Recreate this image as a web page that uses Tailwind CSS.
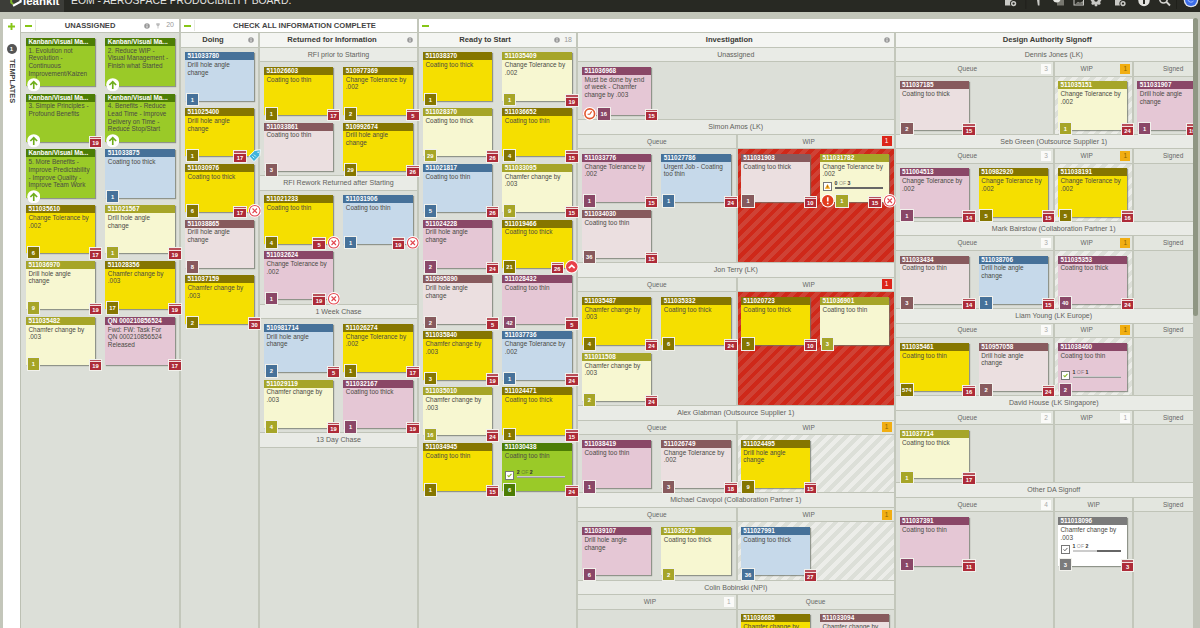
<!DOCTYPE html>
<html lang="en">
<head>
<meta charset="utf-8">
<title>EOM - Aerospace Producibility Board</title>
<script src="https://cdn.jsdelivr.net/npm/@tailwindcss/browser@4"></script>
</head>
<body class="w-[1200px] h-[628px] overflow-hidden bg-[#c3c6ba] font-['Liberation_Sans',Arial,sans-serif] flex flex-col text-[#444]">

<header class="h-[12px] shrink-0 bg-[#282923] flex overflow-hidden">
  <div class="w-[64px] bg-[#3c3d38] flex items-start shrink-0 overflow-hidden">
    <svg class="ml-[10px] w-[12px] h-[12px] -mt-[5px]" viewBox="0 0 12 12"><path d="M1.2 2v5.6l2 1.6" fill="none" stroke="#7fb52a" stroke-width="2"/><path d="M3 10.8l7.6-4.2V2" fill="none" stroke="#fff" stroke-width="2.2"/></svg>
    <span class="text-white font-bold text-[11.5px] leading-[12px] -mt-[5px] ml-[1px]">leankit</span>
  </div>
  <span class="text-[#e4e4e0] text-[10.35px] leading-[12px] -mt-[5px] ml-[7px] whitespace-nowrap">EOM - AEROSPACE PRODUCIBILITY BOARD.</span>
  <svg class="ml-auto w-[200px] h-[12px] shrink-0" viewBox="1000 0 200 12" fill="#c9c9c5">
    <path d="M1005 0h8v5.5h-8z"/><circle cx="1013.6" cy="3.6" r="3.6" fill="#282923"/><circle cx="1013.6" cy="3.6" r="1.9" fill="none" stroke="#c9c9c5" stroke-width="1.5"/>
    <path d="M1025.5 0h.7v9h-.7zM1176 0h.7v9h-.7z" fill="#1c1d18"/>
    <path d="M1037 0h2.5v5.5h-1.6z"/>
    <path d="M1057 0h7v5.5h-7z" fill="#77776f"/><path d="M1053 0h7.5a4 4 0 0 1-7.500 0z" fill="#e6e6e2"/>
    <path d="M1073.500 0h1v4.500h8.500v-4.500h1v5.500h-10.500z"/><path d="M1075.500 3.800l2.500-2 2 1 3-1.800v2.800z" fill="#8c8c86"/>
    <path d="M1090.500 0h11l-1.300 2 .5 2-1.800.9-1.200-.9-.6 2.200h-2.200l-.6-2.200-1.300.9-1.700-.9.500-2z"/><circle cx="1096" cy="0" r="1.800" fill="#282923"/>
    <path d="M1115 0h8v5.500h-8z"/><circle cx="1123" cy="3.600" r="3.600" fill="#282923"/><circle cx="1123" cy="3.600" r="1.900" fill="none" stroke="#c9c9c5" stroke-width="1.500"/>
    <circle cx="1144" cy=".5" r="5.700" fill="#e2e2de"/><path d="M1143 -1h2v5h-2z" fill="#282923"/>
    <circle cx="1163.500" cy="-.8" r="3.800" fill="none" stroke="#d5d5d1" stroke-width="1.500"/><path d="M1166 1.500l4 4" stroke="#d5d5d1" stroke-width="1.800"/>
    <circle cx="1191" cy="0" r="7.300" fill="#dfe3ea"/><circle cx="1191" cy="0" r="6" fill="#3c6de8"/><path d="M1188 0a3 2.500 0 0 0 5.500 1" stroke="#a9c2ff" fill="none"/>
  </svg>
</header>

<div class="flex-1 flex pt-[7px] pl-[3px] min-h-0">
  <!-- Templates drawer -->
  <aside class="w-[17px] shrink-0 bg-white flex flex-col items-center">
    <svg class="w-[7px] h-[7px] mt-[4px]" viewBox="0 0 7 7"><path d="M3.500 0v7M0 3.500h7" stroke="#86c616" stroke-width="1.900"/></svg>
    <span class="mt-[14px] w-[10px] h-[10px] rounded-full bg-[#555] text-white text-[6px] leading-[10px] text-center font-bold">1</span>
    <span class="mt-[5px] text-[7.400px] leading-[10px] font-bold [writing-mode:vertical-rl]">TEMPLATES</span>
  </aside>

  <!-- Board -->
  <main class="w-[1173px] shrink-0 overflow-hidden flex bg-[#dcdfd8]">
    <section class="w-[159px] shrink-0 flex flex-col border-l border-[#bcc0b3]">
      <div class="h-[14px] shrink-0 bg-white border-b border-[#c0c4b8] flex items-center text-[7.600px] font-bold">
        <i class="block w-[7px] h-[2px] bg-[#86c616] ml-[4px]"></i><i class="block w-px h-[11px] bg-[#e6e8e2] ml-[3px]"></i>
        <span class="flex-1 text-center">UNASSIGNED</span>
        <span class="text-[#999] font-normal text-[7px] flex items-center gap-[5px] mr-[5px]" data-i="info,pin">20</span>
      </div>
      <div id="unassigned"></div>
    </section>

    <section class="w-[238px] shrink-0 flex flex-col">
      <div class="h-[14px] shrink-0 bg-white border-b border-b-[#c0c4b8] border-l-2 border-l-[#c3c7bb] flex items-center text-[7.600px] font-bold">
        <i class="block w-[7px] h-[2px] bg-[#86c616] ml-[3px]"></i><i class="block w-px h-[11px] bg-[#e6e8e2] ml-[3px]"></i>
        <span class="flex-1 text-center whitespace-nowrap -ml-[3px]">CHECK ALL INFORMATION COMPLETE</span>
      </div>
      <div class="flex flex-1">
        <div class="w-[79px] border-l-2 border-[#c3c7bb]" id="doing"></div>
        <div class="w-[159px] border-l-2 border-[#c3c7bb]" id="returned"></div>
      </div>
    </section>

    <section class="w-[795px] shrink-0 flex flex-col">
      <div class="h-[14px] shrink-0 bg-white border-b border-b-[#c0c4b8] border-l-2 border-l-[#c3c7bb] flex items-center">
        <i class="block w-[7px] h-[2px] bg-[#86c616] ml-[3px]"></i>
      </div>
      <div class="flex flex-1">
        <div class="w-[159px] shrink-0 border-l-2 border-[#c3c7bb]" id="ready"></div>
        <div class="w-[317.500px] shrink-0 border-l-2 border-[#c3c7bb]" id="investigation"></div>
        <div class="w-[318.500px] shrink-0 border-l-2 border-[#c3c7bb] flex flex-col" id="design"></div>
      </div>
    </section>
  </main>

  <div class="relative z-20 w-[7px] shrink-0 bg-[#c1c4b9] -mt-[1px]"><div class="w-[5px] h-[298px] rounded-full bg-[#8f9683]"></div></div>
</div>

<script>
const K = {
  g: ['bg-[#4c7d04]', 'bg-[#9aca28]'],
  y: ['bg-[#857600]', 'bg-[#f5df00]'],
  c: ['bg-[#a6a528]', 'bg-[#f7f7d1]'],
  b: ['bg-[#467199]', 'bg-[#c6d9ea]'],
  p: ['bg-[#8a4767]', 'bg-[#e5c7d5]'],
  r: ['bg-[#875a5d]', 'bg-[#ebdfe0]'],
  w: ['bg-[#7b7b7b]', 'bg-[#ffffff]']
};
const T = {
  dh: 'Drill hole angle<br>change', ct: 'Change Tolerance by<br>.002', ch: 'Chamfer change by<br>.003',
  ck: 'Coating too thick', cn: 'Coating too thin'
};
const svg = (body, cls) => `<svg class="${cls || 'w-[13.500px] h-[13.500px]'} shrink-0" viewBox="0 0 14 14">${body}</svg>`;
const I = {
  up: svg('<circle cx="7" cy="7" r="6.800" fill="#fff"/><path d="M7 11.500V4M3.500 7.300L7 3.700l3.500 3.600" fill="none" stroke="#6fae1c" stroke-width="1.700"/>'),
  x: svg('<circle cx="7" cy="7" r="7" fill="#fff"/><circle cx="7" cy="7" r="5.500" fill="#fff" stroke="#e2474f" stroke-width="1.100"/><path d="M4.700 4.700l4.600 4.600M9.300 4.700L4.700 9.300" stroke="#e2474f" stroke-width="1.200"/>'),
  clock: svg('<circle cx="7" cy="7" r="7" fill="#fff"/><circle cx="7" cy="7" r="5" fill="#fff" stroke="#e2582f" stroke-width="1.700"/><path d="M9 4.500L7 7.500H4.800" fill="none" stroke="#e2582f" stroke-width="1.200"/>'),
  excl: svg('<circle cx="7" cy="7" r="7" fill="#fff"/><circle cx="7" cy="7" r="5.900" fill="#e23d1c"/><path d="M7 3.300v4.600M7 9v1.700" stroke="#fff" stroke-width="1.700"/>'),
  chev: svg('<circle cx="7" cy="7" r="7" fill="#fff"/><circle cx="7" cy="7" r="6" fill="#e8404a"/><path d="M4 8.500l3-3 3 3" fill="none" stroke="#fff" stroke-width="1.700"/>'),
  tag: svg('<path d="M1 7.500L7 1.500l5.800-.8-.6 6.200-6 6.200z" fill="#3fb4dc" stroke="#fff" stroke-width="1"/><path d="M4.500 7.500l2 2M6.200 5.800l2 2" stroke="#fff" stroke-width=".9"/><circle cx="10.500" cy="3.300" r=".8" fill="#fff"/>'),
  info: svg('<circle cx="7" cy="7" r="6.500" fill="#999"/><path d="M7 3v2M7 6v5" stroke="#fff" stroke-width="2"/>', 'w-[6px] h-[6px]'),
  pin: svg('<path d="M3 2h8v4l-3 3v5H6V9L3 6z" fill="#bbb"/>', 'w-[6px] h-[7px]')
};
const check = {
  ok: '<path d="M2 4.300l1.700 1.800L7 2.500" fill="none" stroke="#86b71f" stroke-width="1.400"/>',
  gray: '<path d="M2 4.300l1.700 1.800L7 2.500" fill="none" stroke="#555" stroke-width="1.200"/>',
  warn: '<path d="M4.500 1.300l3.400 6H1.100z" fill="#f0a31c"/><path d="M4.500 3.200v2.400" stroke="#7a4a00" stroke-width=".8"/>'
};
/* "colour|id|text|count|date|right icon|left icon|done,total,check icon" */
function card(s) {
  const [k, id, t, n, d, ri, li, pr] = s.split('|'), [h, b] = K[k];
  let prog = '';
  if (pr) {
    const [a, z, ic] = pr.split(','), pct = 100 * a / z;
    prog = `<div class="absolute left-[3px] top-[28px] flex gap-[2.500px] items-start">
      <svg class="w-[9px] h-[9px] bg-white border border-[#777]" viewBox="0 0 9 9">${check[ic]}</svg>
      <div class="w-[48px]"><div class="text-[5.200px] leading-[5px] text-[#333] -mt-px"><b>${a}</b> <span class="opacity-50">OF</span> <b>${z}</b></div>
      <div class="h-[2px] mt-px ${ic === 'ok' ? 'bg-[#999]' : 'bg-[#666]'}"><div class="h-[1.500px] bg-[#ccc]" style="width:${pct}%"></div></div></div></div>`;
  }
  return `<div class="relative w-[69.300px] h-[48.300px] ${b} shadow-[1px_1px_1px_rgba(110,115,105,0.7)]">
    <div class="${h} h-[8px] pl-[2.500px] text-white font-bold text-[6.400px] leading-[8.500px] whitespace-nowrap overflow-hidden">${id}</div>
    <div class="pl-[2.500px] pt-[.8px] text-[6.400px] leading-[7.650px] whitespace-nowrap text-[#4a4a44]">${t in T ? T[t] : t}</div>
    ${prog}
    <div class="absolute z-10 left-[.5px] top-[40.500px] flex gap-[1px]">${li ? I[li] : ''}${n ? `<span class="${h} min-w-[13.500px] h-[13.500px] border border-[#f1f1ec] text-white font-bold text-[5.800px] leading-[12px] text-center">${n}</span>` : ''}</div>
    <div class="absolute z-10 right-[-7px] top-[40.500px] flex items-start gap-[1px]">${d ? `<span class="mt-[1.500px] w-[13.500px] h-[12.500px] border border-[#f1f1ec] bg-[#ad2b38] text-white font-bold text-[5.800px] text-center flex flex-col"><i class="h-[2.500px] bg-[#b8505a] border-b border-[#f3dfe0] block shrink-0"></i><span class="leading-[8px]">${d}</span></span>` : ''}${ri ? I[ri] : ''}</div>
  </div>`;
}
const grid2 = 'grid grid-cols-[79.300px_79.300px] auto-rows-[55.800px]';
const grid1 = 'grid grid-cols-[79.300px] auto-rows-[55.800px]';
const bg = {
  red: 'bg-[repeating-linear-gradient(135deg,#cf2819_0_4.2px,#cf4235_4.2px_8.4px)]',
  gray: 'bg-[repeating-linear-gradient(135deg,#dcdfd8_0_4.2px,#ecede9_4.2px_8.4px)]',
  none: ''
};
const cells = (cs, rows, g, pad) => `<div class="${g} ${pad} pt-[4.800px]" style="height:${rows ? rows * 55.8 + 2.4 + 'px' : 'auto'}">${cs.map(c => c ? card(c) : '<div></div>').join('')}</div>`;
const head = (t, n) => `<div class="h-[14.500px] shrink-0 bg-[#f4f5f2] border-b border-[#c0c4b8] flex items-center text-[7.600px] font-bold text-[#3a3a36]"><span class="flex-1 text-center">${t}</span><span class="flex items-center gap-[4px] pl-[3px] pr-[4px] font-normal text-[7px] text-[#999]">${I.info}${n || ''}</span></div>`;
const title = t => `<div class="h-[14.500px] shrink-0 bg-[#e9ebe6] border-b border-[#c0c4b8] text-center text-[7.050px] leading-[14px] text-[#62625c]">${t}</div>`;
const badge = { red: 'bg-[#dc2519] text-white', orange: 'bg-[#f1ae12] text-[#8a6500]', white: 'bg-[#fafaf8] text-[#aaa]' };
const sub = (t, b, n) => `<div class="h-[14.500px] shrink-0 bg-[#e3e6df] border-b border-[#c0c4b8] flex items-center text-[6.500px] text-[#666]"><span class="flex-1 text-center">${t}</span>${b ? `<span class="${badge[b]} w-[10px] h-[10px] mr-[2px] ml-[2px] text-center leading-[10.500px]">${n}</span>` : ''}</div>`;
const put = (id, h) => document.getElementById(id).innerHTML = h;

document.querySelectorAll('[data-i]').forEach(e => e.insertAdjacentHTML('afterbegin', e.dataset.i.split(',').map(n => I[n]).join('')));

put('unassigned', cells([
  'g|Kanban/Visual Ma...|1. Evolution not<br>Revolution -<br>Continuous<br>Improvement/Kaizen||||up', 'g|Kanban/Visual Ma...|2. Reduce WIP -<br>Visual Management -<br>Finish what Started||||up',
  'g|Kanban/Visual Ma...|3. Simple Principles -<br>Profound Benefits||19||up', 'g|Kanban/Visual Ma...|4. Benefits - Reduce<br>Lead Time - Improve<br>Delivery on Time -<br>Reduce Stop/Start||||up',
  'g|Kanban/Visual Ma...|5. More Benefits -<br>Improve Predictability<br>- Improve Quality -<br>Improve Team Work||||up', 'b|511033875|ck|1',
  'y|511035610|ct|6|17', 'c|511021567|dh|1|19',
  'c|511036970|dh|9|19', 'y|511028356|ch|17|19',
  'c|511035482|ch|1|19', 'p|QN 000210856524|Fwd: FW: Task For<br>QN 000210856524<br>Released||17'
], 0, grid2, 'pl-[5px]'));

put('doing', head('Doing') + cells(['b|511033780|dh|1', 'y|511025400|dh|1|17|tag', 'y|511030976|ck|6|17|x', 'r|511038865|dh|8', 'y|511037159|ch|2|30'], 0, grid1, 'pl-[4px]'));

put('returned', head('Returned for Information') +
  title('RFI prior to Starting') + cells(['y|511026603|cn|1|17', 'y|510977369|ct|2|5', 'r|511033861|cn|3', 'y|510992674|dh|29|26'], 2, grid2, 'pl-[4px] border-b border-[#c0c4b8]') +
  title('RFI Rework Returned after Starting') + cells(['y|511021233|cn|4|5|x', 'b|511031906|cn|1|19|x', 'p|511032624|ct|1|19|x'], 2, grid2, 'pl-[4px] border-b border-[#c0c4b8]') +
  title('1 Week Chase') + cells(['b|510981714|dh|2|5', 'y|511026274|ct|1|17', 'c|511029119|ch|4|19', 'p|511032167|ck|1|19'], 2, grid2, 'pl-[4px] border-b border-[#c0c4b8]') +
  title('13 Day Chase'));

put('ready', head('Ready to Start', '18') + cells([
  'y|511038370|ck|1', 'c|511035409|ct|1|19', 'c|511028370|ck|29|26', 'y|511036652|cn|4|15',
  'b|511021817|cn|5|26', 'c|511033095|ch|9|15', 'p|511024228|dh|2|24', 'y|511019466|ck|21|26|chev',
  'r|510995890|dh|2|5', 'p|511028432|cn|42|5', 'y|511035840|ch|3|19', 'b|511037736|ct|1|24',
  'c|511035010|ch|16|24', 'y|511024471|ck|1|15', 'y|511034945|cn|1|15', 'g|511030438|cn|6|24|||2,2,ok'
], 0, grid2, 'pl-[4px]'));

const half = (s, cs, rows, fill, first) => `<div class="w-1/2 ${first ? '' : 'border-l-2 border-[#c3c7bb]'}">${s}<div class="${bg[fill]}">${cells(cs, rows, grid2, (first ? 'pl-[4px]' : 'pl-[3px]') + ' border-b border-[#c0c4b8]')}</div></div>`;
const inv = (name, rows, q, w, b, fill) => title(name) + `<div class="flex">${half(sub('Queue'), q, rows, 'none', 1)}${half(sub('WIP', b, 1), w, rows, fill)}</div>`;
put('investigation', head('Investigation') + title('Unassigned') +
  cells(['p|511036968|Must be done by end<br>of week - Chamfer<br>change by .003|16|15||clock'], 1, grid2, 'pl-[4px] border-b border-[#c0c4b8]') +
  inv('Simon Amos (LK)', 2, ['p|511033776|ct|1|15', 'b|511027786|Urgent Job - Coating<br>too thin|1|24', 'r|511034030|cn|36|15'], ['r|511031903|ck|1|10', 'c|511031782|ct|1|15|x|excl|0,3,warn'], 'red', 'red') +
  inv('Jon Terry (LK)', 2, ['y|511035487|ch|4|24', 'y|511035332|ck|6|24', 'c|511011508|ch|2|24'], ['y|511020723|ck|5|10', 'c|511036901|cn|3'], 'red', 'red') +
  inv('Alex Glabman (Outsource Supplier 1)', 1, ['p|511038419|cn|1', 'r|511026749|ct|3|18'], ['y|511024495|dh|9|15'], 'orange', 'gray') +
  inv('Michael Cavopol (Collaboration Partner 1)', 1, ['p|511039107|dh|6', 'c|511036275|ck|2'], ['b|511027991|ck|36|27'], 'orange', 'gray') +
  title('Colin Bobinski (NPI)') + `<div class="flex">${half(sub('WIP', 'white', 1), [], 1, 'none', 1)}${half(sub('Queue'), ['y|511036685|Chamfer change by', 'r|511033094|Chamfer change by'], 1, 'none')}</div>`);

const des = (name, q, w, s, qn, wb, wn, fill, last) => title(name) + `<div class="flex ${last ? 'flex-1' : ''}">
  <div class="w-[157.500px] shrink-0">${sub('Queue', 'white', qn)}${cells(q, 1, grid2, 'pl-[4px] ' + (last ? '' : 'border-b border-[#c0c4b8]'))}</div>
  <div class="w-[79.300px] shrink-0 border-l-2 border-[#c3c7bb]">${sub('WIP', wb, wn)}<div class="${bg[fill]}">${cells(w, 1, grid1, 'pl-[3px] ' + (last ? '' : 'border-b border-[#c0c4b8]'))}</div></div>
  <div class="w-[79.700px] shrink-0 border-l-2 border-[#c3c7bb]">${sub('Signed')}${cells(s, 1, grid1, 'pl-[3px] ' + (last ? '' : 'border-b border-[#c0c4b8]'))}</div></div>`;
put('design', head('Design Authority Signoff') +
  des('Dennis Jones (LK)', ['r|511037185|ck|2|15'], ['c|511035151|ct|1|24'], ['p|511031907|dh|1|19|x'], 3, 'orange', 1, 'gray') +
  des('Seb Green (Outsource Supplier 1)', ['p|511004513|ct|1|14', 'y|510982920|ct|5|15'], ['y|511038191|ct|5|16'], [], 3, 'orange', 1, 'gray') +
  des('Mark Bairstow (Collaboration Partner 1)', ['r|511033434|cn|3|14', 'b|511038706|dh|1|15'], ['p|511035353|ck|40|24'], [], 3, 'orange', 1, 'gray') +
  des('Liam Young (LK Europe)', ['y|511035461|cn|574|16', 'r|510957058|dh|2|24'], ['p|511038460|cn|2||||1,1,ok'], [], 3, 'orange', 1, 'gray') +
  des('David House (LK Singapore)', ['c|511037714|ck|1|17'], [], [], 2, 'white', 1, 'none') +
  des('Other DA Signoff', ['p|511037391|cn|1|11'], ['w|511018096|ch|3|3|||1,2,gray'], [], 4, '', '', 'none', 1));
</script>
</body>
</html>
